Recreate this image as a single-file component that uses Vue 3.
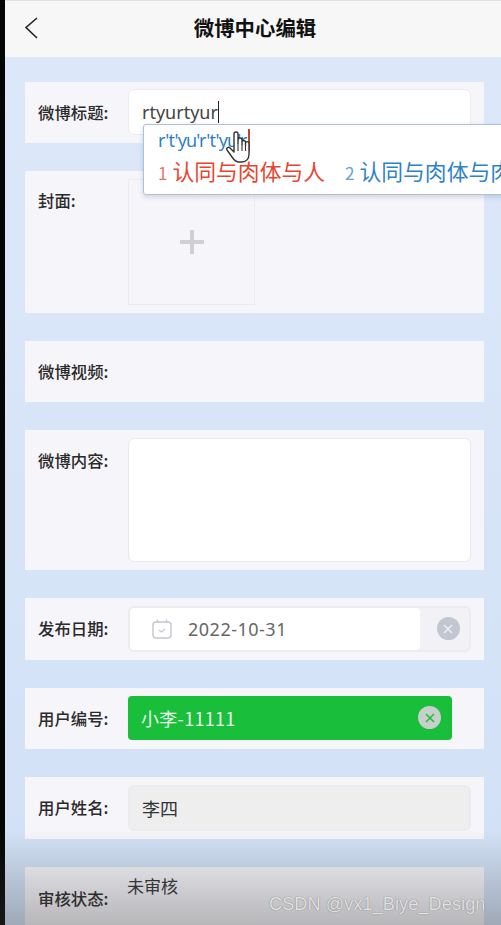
<script setup>
const candidates = [
  { n: '1', t: '认同与肉体与人', cls: 'red' },
  { n: '2', t: '认同与肉体与肉体', cls: 'blue' }
]
</script>

<template>
  <div class="screen">
    <div class="edge"></div>
    <div class="page">
      <header class="bar">
        <svg class="back" width="16" height="24" viewBox="0 0 16 24"><path d="M14 3 L3 12.500 L14 23" fill="none" stroke="#222" stroke-width="1.600"/></svg>
        <h1>微博中心编辑</h1>
      </header>
      <main class="list">
        <section class="card h61 center">
          <label>微博标题:</label>
          <div class="field white title"><span>rtyurtyur</span><i class="caret"></i></div>
        </section>
        <section class="card cover">
          <label>封面:</label>
          <div class="upload"><span class="plus"></span></div>
        </section>
        <section class="card h61 center"><label>微博视频:</label></section>
        <section class="card content">
          <label>微博内容:</label>
          <div class="area"></div>
        </section>
        <section class="card h62 center">
          <label>发布日期:</label>
          <div class="field date">
            <div class="date-main">
              <svg class="cal" width="22" height="22" viewBox="0 0 22 22" fill="none" stroke="#c3c7cf" stroke-width="1.400">
                <rect x="2" y="4" width="18" height="16" rx="3"/>
                <path d="M6.500 1.500 V5 M15.500 1.500 V5"/>
                <path d="M8 12 l2.500 2 l3.500 -3" stroke-width="1.100"/>
              </svg>
              <span>2022-10-31</span>
            </div>
            <div class="date-clear">
              <span class="clear grey"><svg width="12" height="12" viewBox="0 0 12 12"><path d="M2 2 L10 10 M10 2 L2 10" stroke="#eef0f3" stroke-width="1.500"/></svg></span>
            </div>
          </div>
        </section>
        <section class="card h61 center">
          <label>用户编号:</label>
          <div class="user">
            <span>小李-11111</span>
            <span class="clear light"><svg width="12" height="12" viewBox="0 0 12 12"><path d="M2 2 L10 10 M10 2 L2 10" stroke="#19be3b" stroke-width="1.500"/></svg></span>
          </div>
        </section>
        <section class="card h62 center">
          <label>用户姓名:</label>
          <div class="field disabled">李四</div>
        </section>
        <section class="card status">
          <label>审核状态:</label>
          <div class="state">未审核</div>
        </section>
      </main>
    </div>

    <div class="shade"></div>

    <div class="ime">
      <div class="typed"><span>r't'yu'r't'yu'r</span><i class="ime-caret"></i></div>
      <div class="cands">
        <span v-for="c in candidates" :key="c.n" class="cand" :class="c.cls"><em>{{ c.n }}</em>{{ c.t }}</span>
      </div>
      <svg class="hand" width="26" height="36" viewBox="0 0 26 36">
        <path d="M9 20 V5 a2 2 0 0 1 4 0 V14 V11 a2 2 0 0 1 4 0 V15 V12.500 a2 2 0 0 1 3.500 0 V16 V14 a1.800 1.800 0 0 1 3.500 0 V25 c0 5 -3 8 -7 8 h-3 c-3 0 -5 -2 -7 -5 L2 21 c-1.200 -2 1.500 -3.500 3 -2 L9 23 Z" fill="#fff" stroke="#333" stroke-width="1.400" stroke-linejoin="round"/>
        <path d="M13 14 V22 M17 15 V22 M20.500 16 V22" stroke="#333" stroke-width="1.100"/>
      </svg>
    </div>

    <div class="mark">CSDN @vx1_Biye_Design</div>
  </div>
</template>

<style>
html, body { margin: 0; padding: 0; background: #000; }
</style>

<style scoped>
.screen {
  position: relative;
  display: flex;
  width: 501px;
  height: 925px;
  overflow: hidden;
  background: #000;
  font-family: "Noto Sans CJK SC", "Liberation Sans", sans-serif;
}
.edge { width: 5px; flex: none; background: #050505; }
.page {
  flex: 1;
  min-width: 0;
  background: linear-gradient(#dde8f9, #d2e1f7);
}
.bar {
  position: relative;
  display: flex;
  align-items: center;
  justify-content: center;
  box-sizing: border-box;
  height: 57px;
  padding: 0 0 3px 4px;
  background: #f7f7f7;
  border-top: 1px solid #e2e2e2;
}
.bar h1 {
  margin: 0;
  font-size: 20.400px;
  line-height: 1;
  font-weight: 700;
  color: #111;
}
.back { position: absolute; left: 18px; top: 14px; }
.list {
  display: flex;
  flex-direction: column;
  gap: 28px;
  padding: 25px 17px 0 20px;
}
.card {
  display: flex;
  box-sizing: border-box;
  background: #f6f5fa;
  padding-left: 13px;
}
.card label {
  flex: none;
  width: 90px;
  margin-top: -2px;
  font-size: 16.400px;
  line-height: 22px;
  font-weight: 500;
  color: #2a2a2a;
  white-space: nowrap;
}
.center { align-items: center; }
.h61 { height: 61px; }
.h62 { height: 62px; }
.field {
  box-sizing: border-box;
  width: 343px;
  height: 46px;
  margin-top: -1px;
  border: 2px solid #ebebf0;
  border-radius: 6px;
  display: flex;
  align-items: center;
  font-size: 18px;
  color: #444;
}
.white { background: #fff; border-width: 1px; }
.title { padding-left: 13px; font-family: "Noto Sans", "Liberation Sans", sans-serif; }
.caret { width: 1px; height: 22px; background: #222; }
.cover { height: 142px; padding-top: 8px; }
.cover label { margin-top: 10px; }
.upload {
  box-sizing: border-box;
  width: 127px;
  height: 126px;
  border: 1px solid #ecebf0;
  display: flex;
  align-items: center;
  justify-content: center;
}
.plus {
  width: 24px;
  height: 24px;
  background:
    linear-gradient(#d0d0d4, #d0d0d4) center / 24px 4px no-repeat,
    linear-gradient(#d0d0d4, #d0d0d4) center / 4px 24px no-repeat;
}
.content { height: 140px; padding-top: 8px; }
.content label { margin-top: 11px; }
.area {
  box-sizing: border-box;
  width: 343px;
  height: 124px;
  background: #fff;
  border: 1.500px solid #e8e8ee;
  border-radius: 6px;
}
.date { background: #f2f2f6; padding: 0; justify-content: space-between; }
.date-main {
  box-sizing: border-box;
  display: flex;
  align-items: center;
  width: 290px;
  height: 100%;
  padding-left: 21px;
  background: #fff;
  border-radius: 4px;
  color: #666;
  letter-spacing: 0.500px;
  font-family: "Noto Sans", "Liberation Sans", sans-serif;
}
.date-main span { margin-left: 15px; }
.date-clear { width: 42px; display: flex; justify-content: center; }
.clear {
  width: 23px;
  height: 23px;
  border-radius: 50%;
  display: flex;
  align-items: center;
  justify-content: center;
}
.grey { background: #c2c6d0; }
.light { background: #c8d0cb; }
.user {
  box-sizing: border-box;
  width: 324px;
  height: 44px;
  margin-top: -2px;
  padding: 0 11px 0 13px;
  display: flex;
  align-items: center;
  justify-content: space-between;
  background: #19be3b;
  border-radius: 4px;
  color: #eafbee;
  font-size: 18px;
  letter-spacing: 0.300px;
}
.disabled {
  background: #eeeeee;
  padding-left: 12px;
  color: #333;
}
.status { height: 62px; align-items: center; }
.status label { margin-top: -1px; }
.state {
  align-self: flex-start;
  margin-top: 7px;
  margin-left: -1px;
  font-size: 17px;
  line-height: 24px;
  color: #333;
}
.shade {
  position: absolute;
  left: 0;
  right: 0;
  bottom: 0;
  height: 95px;
  background: linear-gradient(rgba(60, 60, 60, 0), rgba(60, 60, 60, 0.34));
  pointer-events: none;
}
.ime {
  position: absolute;
  left: 143px;
  top: 124px;
  box-sizing: border-box;
  width: 380px;
  height: 71px;
  background: #fff;
  border: 1px solid #a9c3df;
  border-radius: 3px;
  box-shadow: 0 2px 5px rgba(40, 60, 90, 0.18);
  padding: 0 0 0 14px;
  color: #2f7fc4;
}
.typed {
  display: flex;
  align-items: center;
  height: 30px;
  font-size: 18px;
  font-family: "Noto Sans", "Liberation Sans", sans-serif;
}
.typed span { letter-spacing: -0.850px; }
.ime-caret { width: 2px; height: 22px; margin-left: 1px; background: #c0452e; }
.cands { display: flex; gap: 20px; margin-top: 1px; white-space: nowrap; font-size: 21.800px; line-height: 30px; }
.cand em { font-style: normal; font-size: 17px; margin-right: 5px; opacity: 0.75; }
.red { color: #e8452f; }
.blue { color: #2f82c8; }
.hand { position: absolute; left: 81px; top: 4px; }
.mark {
  position: absolute;
  left: 269px;
  top: 893px;
  font-family: "Liberation Sans", sans-serif;
  font-size: 18px;
  line-height: 22px;
  letter-spacing: 0.150px;
  color: rgba(255, 255, 255, 0.82);
  text-shadow: 0 0 1px rgba(40, 40, 40, 0.7);
  white-space: nowrap;
}
</style>
